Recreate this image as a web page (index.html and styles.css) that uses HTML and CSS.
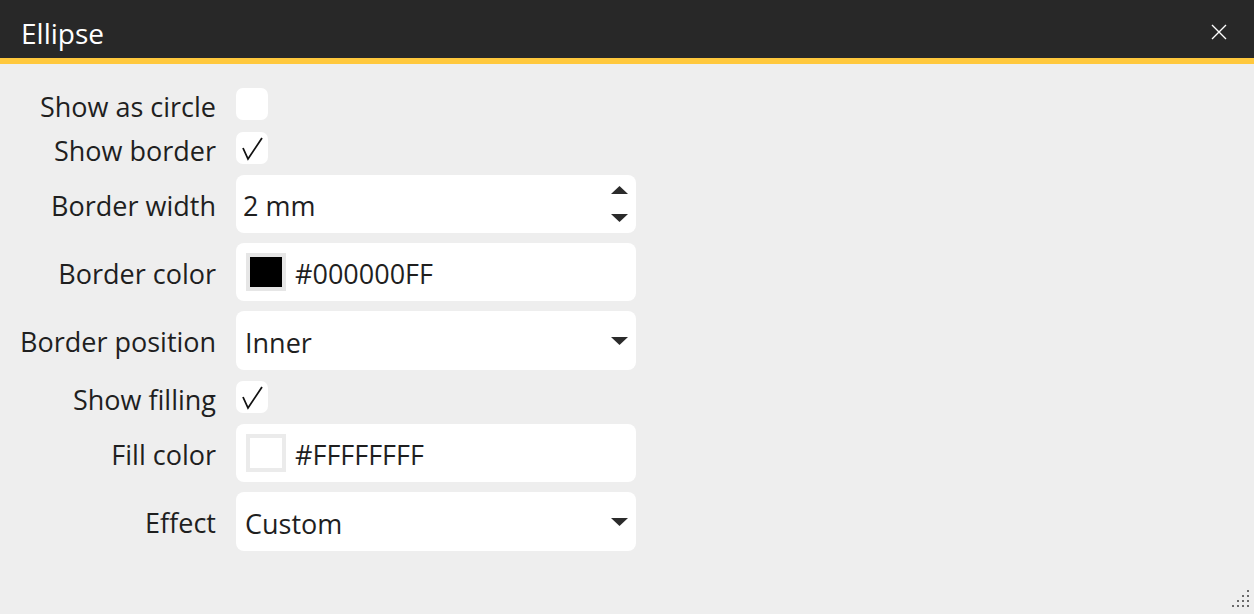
FILE: index.html
```html
<!DOCTYPE html>
<html lang="en">
<head>
    <meta charset="UTF-8">
    <title>Ellipse</title>
    <link rel="stylesheet" href="styles.css">
</head>
<body>
    <div class="dialog">
        <div class="titlebar">
            <span class="title">Ellipse</span>
            <svg class="close" width="16" height="16" viewBox="0 0 16 16">
                <path d="M1 1 L15 15 M15 1 L1 15" stroke="#fff" stroke-width="1.4" fill="none"/>
            </svg>
        </div>

        <div class="form">
            <label class="caption check-row">Show as circle</label>
            <div class="check-row"><span class="checkbox"></span></div>

            <label class="caption check-row">Show border</label>
            <div class="check-row">
                <span class="checkbox">
                    <svg width="32" height="32" viewBox="0 0 32 32"><polyline points="7,16 12,27 26,6" fill="none" stroke="#111" stroke-width="1.8"/></svg>
                </span>
            </div>

            <label class="caption">Border width</label>
            <div class="field">
                <span class="value">2 mm</span>
                <span class="spinner">
                    <svg width="17" height="8" viewBox="0 0 17 8"><polygon points="0,8 17,8 8.5,0" fill="#2b2b2b"/></svg>
                    <svg width="17" height="8" viewBox="0 0 17 8"><polygon points="0,0 17,0 8.5,8" fill="#2b2b2b"/></svg>
                </span>
            </div>

            <label class="caption">Border color</label>
            <div class="field color-field">
                <span class="swatch black"></span>
                <span class="value">#000000FF</span>
            </div>

            <label class="caption combo-caption">Border position</label>
            <div class="field combo">
                <span class="value">Inner</span>
                <svg width="17" height="8" viewBox="0 0 17 8"><polygon points="0,0 17,0 8.5,8" fill="#2b2b2b"/></svg>
            </div>

            <label class="caption check-row">Show filling</label>
            <div class="check-row">
                <span class="checkbox">
                    <svg width="32" height="32" viewBox="0 0 32 32"><polyline points="7,16 12,27 26,6" fill="none" stroke="#111" stroke-width="1.8"/></svg>
                </span>
            </div>

            <label class="caption">Fill color</label>
            <div class="field color-field">
                <span class="swatch white"></span>
                <span class="value">#FFFFFFFF</span>
            </div>

            <label class="caption combo-caption">Effect</label>
            <div class="field combo">
                <span class="value">Custom</span>
                <svg width="17" height="8" viewBox="0 0 17 8"><polygon points="0,0 17,0 8.5,8" fill="#2b2b2b"/></svg>
            </div>
        </div>

        <div class="grip">
            <i style="grid-area: 1 / 4"></i>
            <i style="grid-area: 2 / 3"></i><i style="grid-area: 2 / 4"></i>
            <i style="grid-area: 3 / 2"></i><i style="grid-area: 3 / 3"></i><i style="grid-area: 3 / 4"></i>
            <i style="grid-area: 4 / 1"></i><i style="grid-area: 4 / 2"></i><i style="grid-area: 4 / 3"></i><i style="grid-area: 4 / 4"></i>
        </div>
    </div>
</body>
</html>
```

FILE: styles.css
```css
html, body {
    margin: 0;
    height: 100%;
}

body {
    font-family: "Open Sans", "Noto Sans", sans-serif;
    background-color: #eeeeee;
    color: #1f1f1f;
}

.dialog {
    position: relative;
    height: 614px;
    overflow: hidden;
}

.titlebar {
    height: 58px;
    background-color: #282828;
    border-bottom: 6px solid #ffc83d;
    display: flex;
    align-items: center;
    justify-content: space-between;
    padding: 0 27px 0 21px;
}

.title {
    color: #ffffff;
    font-size: 28px;
    margin-top: 8px;
}

.close {
    margin-top: 5px;
}

.form {
    display: grid;
    grid-template-columns: 196px 400px;
    column-gap: 20px;
    row-gap: 10px;
    padding: 23px 0 0 20px;
}

.caption {
    font-size: 27px;
    text-align: right;
    align-self: center;
    white-space: nowrap;
    height: 58px;
    line-height: 62px;
}

.combo-caption {
    height: 59px;
}

.check-row {
    height: 34px;
    display: flex;
    align-items: center;
}

.caption.check-row {
    display: block;
    line-height: 40px;
}

.checkbox {
    width: 32px;
    height: 32px;
    border-radius: 7px;
    background-color: #ffffff;
}

.checkbox svg {
    display: block;
}

.field {
    height: 58px;
    background-color: #ffffff;
    border-radius: 8px;
    display: flex;
    align-items: center;
    padding: 0 8px 0 7px;
    font-size: 27px;
}

.field .value {
    flex: 1;
    margin-top: 3px;
}

.spinner {
    display: flex;
    flex-direction: column;
    gap: 20px;
}

.spinner svg {
    display: block;
}

.combo {
    height: 59px;
    padding-left: 9px;
}

.color-field {
    padding-left: 10px;
    gap: 9px;
}

.swatch {
    width: 32px;
    height: 30px;
    border: 4px solid #e6e6e6;
}

.swatch.black {
    background-color: #000000;
}

.swatch.white {
    background-color: #ffffff;
    border-color: #ebebeb;
}

.grip {
    position: absolute;
    right: 5px;
    bottom: 7px;
    display: grid;
    grid-template-columns: repeat(4, 2px);
    grid-template-rows: repeat(4, 2px);
    gap: 3px;
}

.grip i {
    width: 2px;
    height: 2px;
    background-color: #6a6a6a;
}
```
